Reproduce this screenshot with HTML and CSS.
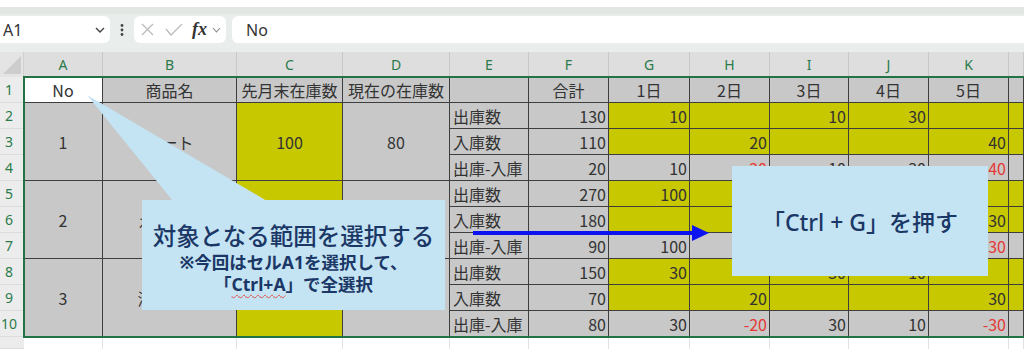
FILE: index.html
```html
<!DOCTYPE html>
<html lang="ja">
  <head>
    <meta charset="UTF-8" />
    <meta name="viewport" content="width=device-width, initial-scale=1.0" />
    <title>在庫表</title>
    <link rel="stylesheet" href="styles.css">
  </head>
  <body>
    <div class="app">
      <div class="top-strip"></div>
      <div class="band"></div>

      <div class="formula-bar">
        <div class="name-box">
          <span>A1</span>
          <svg width="10" height="6" viewBox="0 0 10 6"><polyline points="1,1 5,5 9,1" fill="none" stroke="#444" stroke-width="1.4"/></svg>
        </div>
        <div class="more">
          <svg width="4" height="12" viewBox="0 0 4 12"><circle cx="2" cy="1.5" r="1.4" fill="#444"/><circle cx="2" cy="6" r="1.4" fill="#444"/><circle cx="2" cy="10.5" r="1.4" fill="#444"/></svg>
        </div>
        <div class="fx-box">
          <svg class="ic-x" width="13" height="13" viewBox="0 0 13 13"><path d="M1 1 L12 12 M12 1 L1 12" stroke="#b9b9b9" stroke-width="1.2"/></svg>
          <svg class="ic-ok" width="18" height="13" viewBox="0 0 18 13"><polyline points="1,6 6,12 17,1" fill="none" stroke="#b9b9b9" stroke-width="1.2"/></svg>
          <span class="fx">fx</span>
          <svg width="9" height="6" viewBox="0 0 9 6"><polyline points="1,1 4.5,5 8,1" fill="none" stroke="#888" stroke-width="1.1"/></svg>
        </div>
        <div class="formula-input">No</div>
      </div>

      <div class="sheet">
        <div class="corner">
          <svg width="24" height="25" viewBox="0 0 24 25"><polygon points="21,4 21,22 3,22" fill="#cdcdcd"/></svg>
        </div>
        <div class="ch">A</div><div class="ch">B</div><div class="ch">C</div><div class="ch">D</div>
        <div class="ch">E</div><div class="ch">F</div><div class="ch">G</div><div class="ch">H</div>
        <div class="ch">I</div><div class="ch">J</div><div class="ch">K</div><div class="ch"></div>

        <div class="rh">1</div>
        <div class="c hd active">No</div><div class="c hd">商品名</div><div class="c hd">先月末在庫数</div>
        <div class="c hd">現在の在庫数</div><div class="c hd"></div><div class="c hd">合計</div>
        <div class="c hd">1日</div><div class="c hd">2日</div><div class="c hd">3日</div>
        <div class="c hd">4日</div><div class="c hd">5日</div><div class="c hd"></div>

        <!-- 1 -->
        <div class="rh">2</div>
        <div class="c m">1</div><div class="c m">ノート</div><div class="c m y">100</div><div class="c m">80</div>
        <div class="c lbl">出庫数</div><div class="c n">130</div>
        <div class="c n y">10</div><div class="c n y"></div><div class="c n y">10</div><div class="c n y">30</div><div class="c n y"></div><div class="c y"></div>
        <div class="rh">3</div>
        <div class="c lbl">入庫数</div><div class="c n">110</div>
        <div class="c n y"></div><div class="c n y">20</div><div class="c n y"></div><div class="c n y"></div><div class="c n y">40</div><div class="c y"></div>
        <div class="rh">4</div>
        <div class="c lbl">出庫-入庫</div><div class="c n">20</div>
        <div class="c n">10</div><div class="c n red">-20</div><div class="c n">10</div><div class="c n">30</div><div class="c n red">-40</div><div class="c"></div>

        <!-- 2 -->
        <div class="rh">5</div>
        <div class="c m">2</div><div class="c m">えんぴつ</div><div class="c m y"></div><div class="c m"></div>
        <div class="c lbl">出庫数</div><div class="c n">270</div>
        <div class="c n y">100</div><div class="c n y"></div><div class="c n y"></div><div class="c n y"></div><div class="c n y"></div><div class="c y"></div>
        <div class="rh">6</div>
        <div class="c lbl">入庫数</div><div class="c n">180</div>
        <div class="c n y"></div><div class="c n y"></div><div class="c n y"></div><div class="c n y"></div><div class="c n y">30</div><div class="c y"></div>
        <div class="rh">7</div>
        <div class="c lbl">出庫-入庫</div><div class="c n">90</div>
        <div class="c n">100</div><div class="c n"></div><div class="c n"></div><div class="c n"></div><div class="c n red">-30</div><div class="c"></div>

        <!-- 3 -->
        <div class="rh">8</div>
        <div class="c m">3</div><div class="c m">消しゴム</div><div class="c m y"></div><div class="c m"></div>
        <div class="c lbl">出庫数</div><div class="c n">150</div>
        <div class="c n y">30</div><div class="c n y"></div><div class="c n y">30</div><div class="c n y">10</div><div class="c n y"></div><div class="c y"></div>
        <div class="rh">9</div>
        <div class="c lbl">入庫数</div><div class="c n">70</div>
        <div class="c n y"></div><div class="c n y">20</div><div class="c n y"></div><div class="c n y"></div><div class="c n y">30</div><div class="c y"></div>
        <div class="rh">10</div>
        <div class="c lbl">出庫-入庫</div><div class="c n">80</div>
        <div class="c n">30</div><div class="c n red">-20</div><div class="c n">30</div><div class="c n">10</div><div class="c n red">-30</div><div class="c"></div>

        <div class="rh"></div>
        <div class="e"></div><div class="e"></div><div class="e"></div><div class="e"></div><div class="e"></div><div class="e"></div>
        <div class="e"></div><div class="e"></div><div class="e"></div><div class="e"></div><div class="e"></div><div class="e"></div>
      </div>

      <div class="selection"></div>

      <svg class="marks" width="1024" height="349" viewBox="0 0 1024 349">
        <polygon points="87,95 173,201 267,201" fill="#c4e4f4"/>
        <line x1="473" y1="233" x2="695" y2="233" stroke="#0b14f0" stroke-width="4"/>
        <polygon points="692,225 709,233 692,241" fill="#0b14f0"/>
      </svg>

      <div class="callout callout-range">
        <div class="big">対象となる範囲を選択する</div>
        <div class="small">※今回はセルA1を選択して、</div>
        <div class="small">「<span class="typo">Ctrl+A</span>」で全選択</div>
      </div>

      <div class="callout callout-key">「Ctrl + G」を押す</div>
    </div>
  </body>
</html>
```

FILE: styles.css
```css
body {
  margin: 0;
  font-family: "Noto Sans", "Noto Sans CJK JP", sans-serif;
  background: #fff;
}
.app {
  position: relative;
  width: 1024px;
  height: 349px;
  overflow: hidden;
}
.top-strip {
  height: 7px;
  background: #fff;
}
.band {
  height: 7px;
  background: #e1e6e3;
}
.formula-bar {
  display: flex;
  align-items: flex-start;
  height: 38px;
  padding-top: 2px;
  box-sizing: border-box;
  background: #e9edeb;
}
.name-box {
  width: 110px;
  height: 27px;
  box-sizing: border-box;
  padding: 0 5px 0 3px;
  display: flex;
  align-items: center;
  justify-content: space-between;
  background: #fff;
  border-radius: 0 6px 6px 0;
  font-size: 16px;
  color: #333;
}
.more {
  width: 24px;
  height: 27px;
  display: flex;
  align-items: center;
  justify-content: center;
}
.fx-box {
  width: 92px;
  height: 27px;
  box-sizing: border-box;
  padding-left: 7px;
  display: flex;
  align-items: center;
  background: #fff;
  border-radius: 6px;
}
.ic-x {
  margin-right: 11px;
}
.ic-ok {
  margin-right: 9px;
}
.fx {
  font-family: "Liberation Serif", serif;
  font-style: italic;
  font-weight: bold;
  font-size: 18px;
  color: #333;
  margin-right: 5px;
}
.formula-input {
  flex: 1;
  height: 27px;
  margin-left: 6px;
  padding-left: 14px;
  display: flex;
  align-items: center;
  background: #fff;
  border-radius: 6px 0 0 6px;
  font-size: 16px;
  color: #333;
}

/* grid */
.sheet {
  display: grid;
  grid-template-columns: 24px 79px 134px 106px 107px 79px 80px 81px 80px 79px 80px 80px 15px;
  grid-template-rows: 25px repeat(10, 26px) 12px;
}
.corner {
  background: #e4e4e4;
  border-right: 1px solid #d0d0d0;
  box-sizing: border-box;
}
.corner svg {
  display: block;
}
.ch {
  background: #dedede;
  border-right: 1px solid #c8c8c8;
  box-sizing: border-box;
  display: flex;
  align-items: center;
  justify-content: center;
  font-size: 14px;
  color: #2a7a4a;
}
.rh {
  background: #ececec;
  border-bottom: 1px solid #dcdcdc;
  box-sizing: border-box;
  padding-right: 6px;
  display: flex;
  align-items: center;
  justify-content: center;
  font-size: 14px;
  color: #2a7a4a;
}
.c {
  background: #c8c8c8;
  border-right: 1px solid #3e3e3e;
  border-bottom: 1px solid #3e3e3e;
  box-sizing: border-box;
  display: flex;
  align-items: center;
  font-family: "Noto Sans CJK JP", sans-serif;
  font-size: 16px;
  color: #333;
  white-space: nowrap;
  overflow: hidden;
}
.hd {
  justify-content: center;
}
.active {
  background: #fff;
}
.m {
  grid-row: span 3;
  justify-content: center;
}
.lbl {
  padding-left: 3px;
}
.n {
  justify-content: flex-end;
  padding-right: 2px;
}
.y {
  background: #c8c800;
}
.red {
  color: #e53935;
}
.e {
  border-right: 1px solid #e2e2e2;
}

/* overlays */
.selection {
  position: absolute;
  left: 23px;
  top: 76px;
  width: 1010px;
  height: 262px;
  box-sizing: border-box;
  border: 2px solid #217346;
  pointer-events: none;
}
.marks {
  position: absolute;
  left: 0;
  top: 0;
  pointer-events: none;
}
.callout {
  position: absolute;
  background: #c4e4f4;
  color: #1b3766;
  font-family: "Noto Sans", "Noto Sans CJK JP", sans-serif;
  font-weight: 500;
  text-align: center;
}
.callout-range {
  left: 142px;
  top: 200px;
  width: 303px;
  height: 110px;
  box-sizing: border-box;
  padding-top: 22px;
}
.callout-range .big {
  font-size: 23.5px;
  line-height: 29px;
}
.callout-range .small {
  font-size: 17.5px;
  line-height: 22px;
  font-weight: bold;
}
.typo {
  text-decoration: underline wavy #e0504a;
  text-decoration-thickness: 1px;
  text-underline-offset: 3px;
}
.callout-key {
  left: 732px;
  top: 166px;
  width: 256px;
  height: 110px;
  display: flex;
  align-items: center;
  justify-content: center;
  font-size: 23px;
}
```
